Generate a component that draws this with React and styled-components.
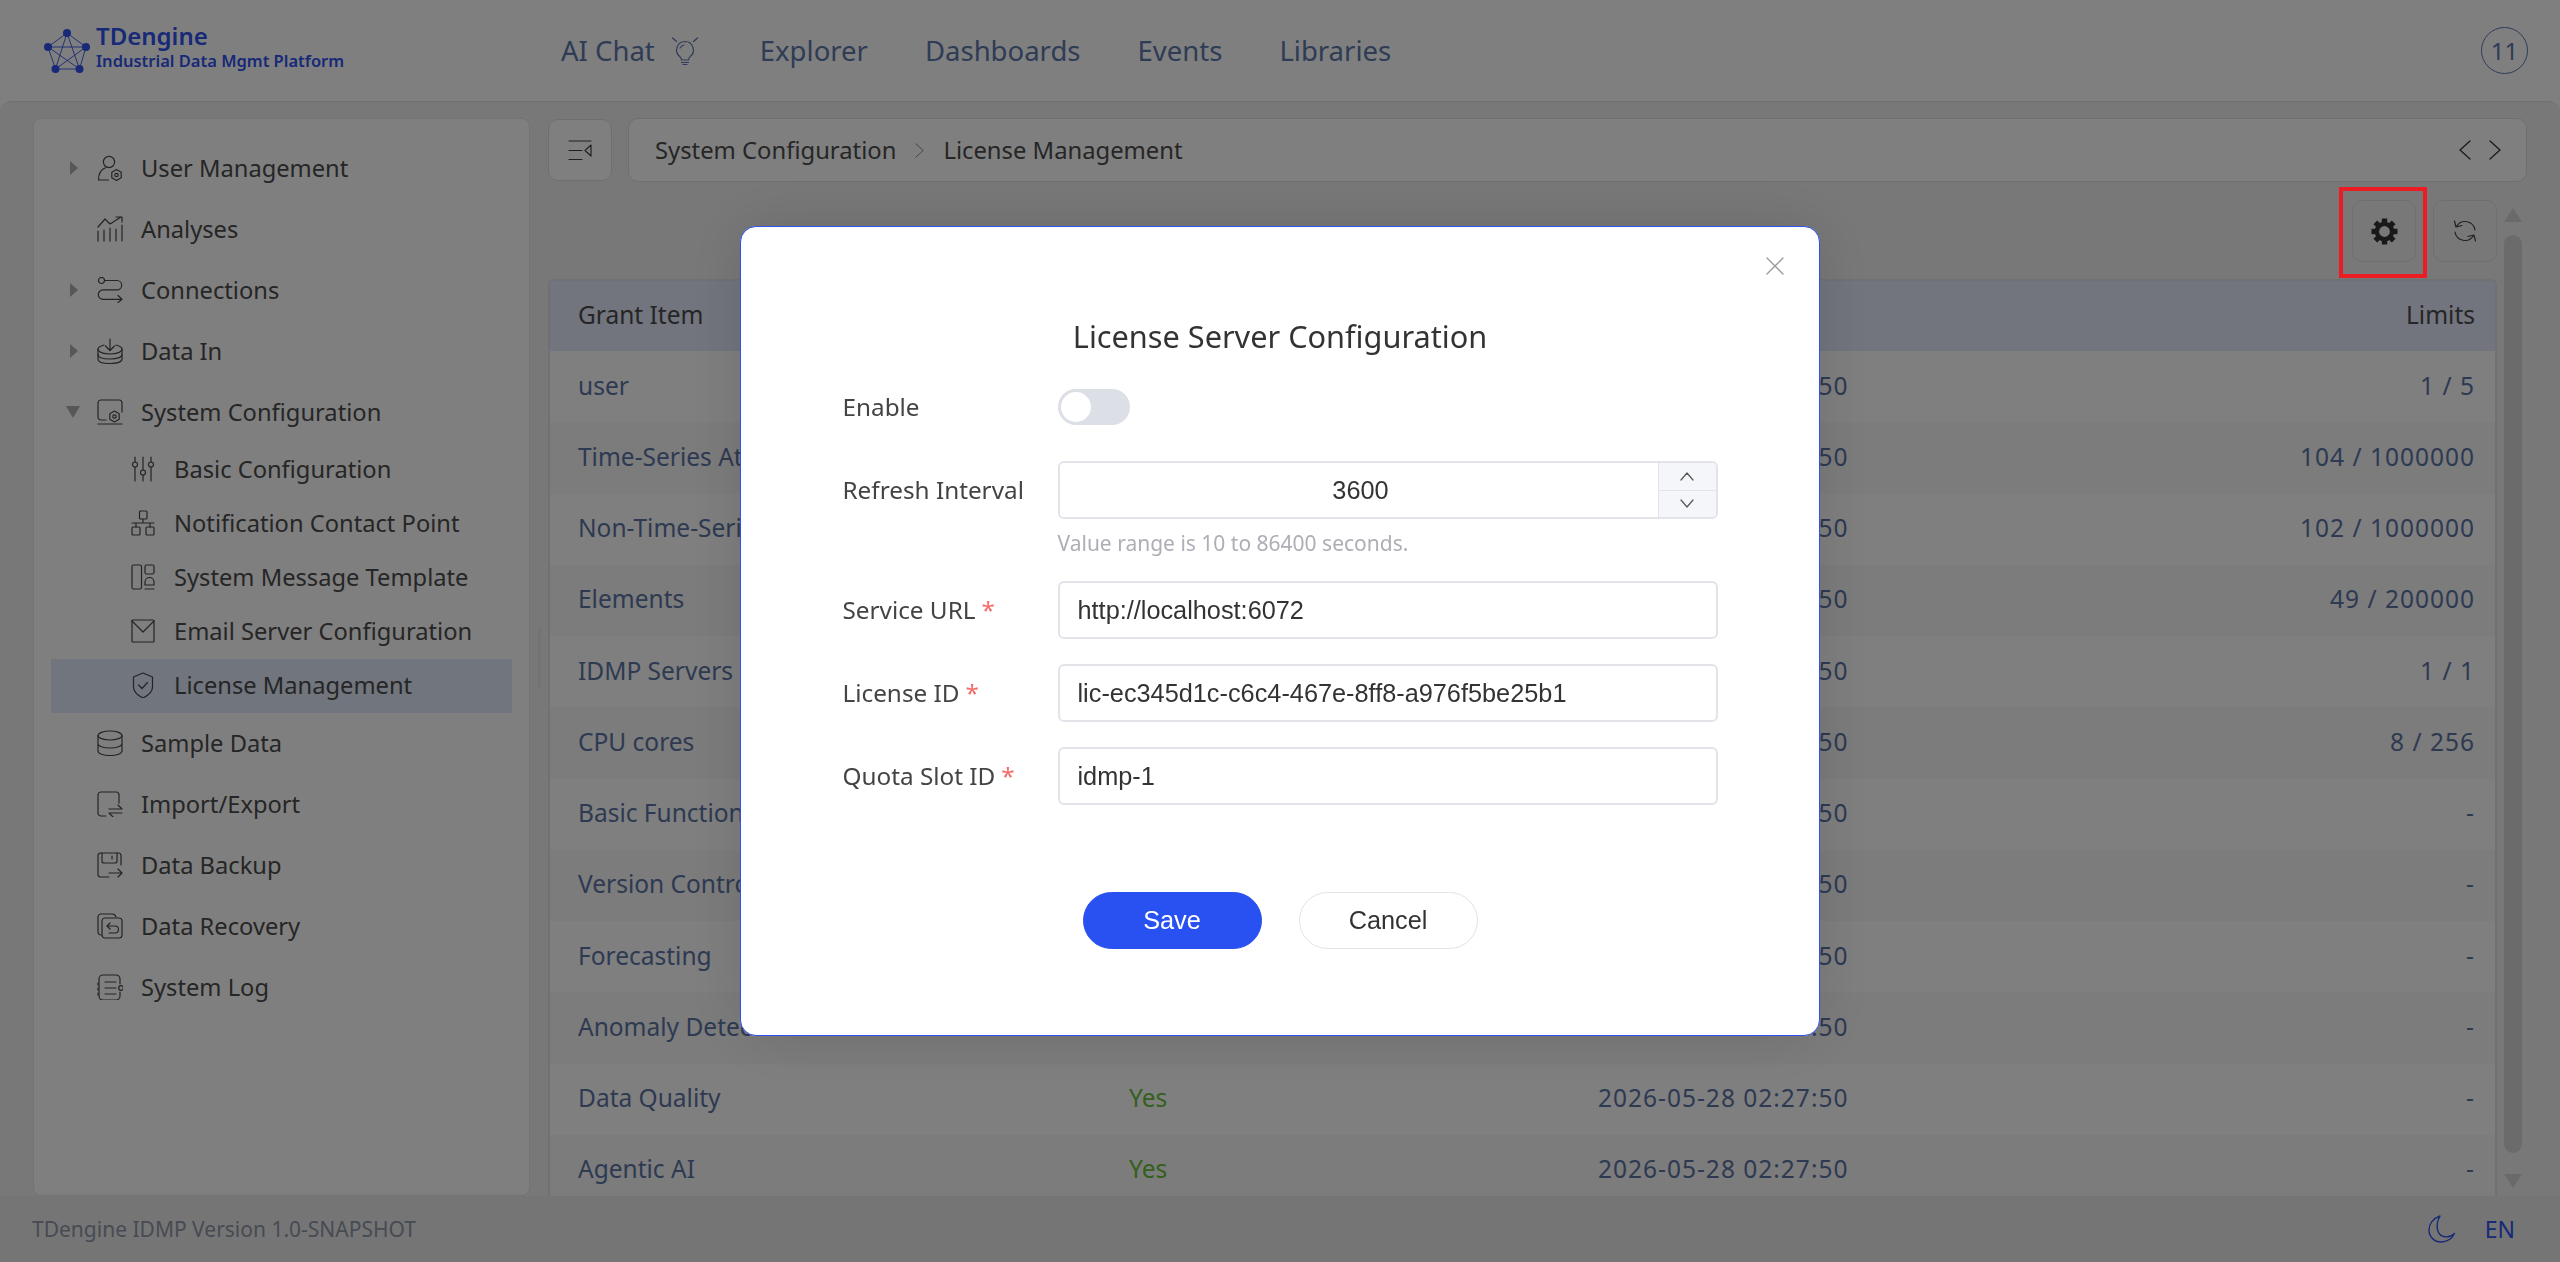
import React from "react";
import styled, { createGlobalStyle } from "styled-components";

const GlobalStyle = createGlobalStyle`
  html, body, #root { margin: 0; height: 100%; }
  body { font-family: "Noto Sans", Roboto, sans-serif; overflow: hidden; }
  * { box-sizing: border-box; }
`;

const Icon = ({ size = 26, h, vb = "0 0 26 26", sw = 1.3, children }) => (
  <svg width={size} height={h || size} viewBox={vb} fill="none" stroke="currentColor" strokeWidth={sw} strokeLinecap="round" strokeLinejoin="round">
    {children}
  </svg>
);

const menuIcons = {
  user: (
    <>
      <circle cx="12" cy="7" r="5.6" />
      <path d="M1.5 25c0-6 2.500-10.500 7-12.200M1.500 25h10" />
      <path d="M19.500 14.500l4.700 2.800v5.400l-4.700 2.800-4.700-2.800v-5.400z" />
      <circle cx="19.500" cy="20" r="1.700" />
    </>
  ),
  analyses: (
    <>
      <path d="M1 25v-10M7 25V14M13 25V12M19 25V13M25 25V9" />
      <path d="M1 11l7-8 5 5 11-7M19 1h6v5" />
    </>
  ),
  connections: (
    <>
      <circle cx="4.500" cy="3.500" r="3" />
      <path d="M8 3.500h12a4.700 4.700 0 0 1 0 9.400H6a4.700 4.700 0 0 0 0 9.400h19M21 18.500l4 3.800-4 3.200" />
    </>
  ),
  dataIn: (
    <>
      <path d="M7 7C3.500 8 1 9 1 11v10c0 3 5 4.500 12 4.500S25 24 25 21V11c0-2-2.500-3-6-4" />
      <path d="M1 11c0 3 5 5 12 5s12-2 12-5M1 16.500c0 3 5 4.500 12 4.500s12-1.500 12-4.500" />
      <path d="M13 1v11M8.500 8l4.500 4.500L17.500 8" />
    </>
  ),
  system: (
    <>
      <path d="M9 21H4a3 3 0 0 1-3-3V4a3 3 0 0 1 3-3h18a3 3 0 0 1 3 3v9M1 25h24" />
      <path d="M17.500 12l4.700 2.700v5.500l-4.700 2.700-4.700-2.700v-5.500z" />
      <circle cx="17.500" cy="17.500" r="1.700" />
    </>
  ),
  sample: (
    <>
      <ellipse cx="13" cy="5.500" rx="12" ry="4.500" />
      <path d="M1 5.500V21c0 2.500 5 4.500 12 4.500S25 23.500 25 21V5.500M1 13.500c0 2.500 5 4.500 12 4.500s12-2 12-4.500" />
    </>
  ),
  importExport: (
    <>
      <path d="M9 25H4a3 3 0 0 1-3-3V4a3 3 0 0 1 3-3h15a3 3 0 0 1 3 3v8" />
      <path d="M12 18h13l-4-4M25 22H12l4 4" />
    </>
  ),
  backup: (
    <>
      <path d="M12 25H3.500A2.500 2.500 0 0 1 1 22.500v-19A2.500 2.500 0 0 1 3.500 1h18A2.500 2.500 0 0 1 24 3.500V13" />
      <path d="M5 1v8a2 2 0 0 0 2 2h11a2 2 0 0 0 2-2V1M15 4v3M12 21h13M21 17l4 4-4 4" />
    </>
  ),
  recovery: (
    <>
      <path d="M4 22a3 3 0 0 1-3-3V4a3 3 0 0 1 3-3h11a4 4 0 0 1 4 3" />
      <rect x="5" y="5" width="20" height="20" rx="3" />
      <path d="M10 13h8a3.500 3.500 0 0 1 0 7h-6M10 13l3-3M10 13l3 3" />
    </>
  ),
  log: (
    <>
      <path d="M23 10V5a4 4 0 0 0-4-4H6a4 4 0 0 0-4 4v17a4 4 0 0 0 4 4h13a4 4 0 0 0 4-4v-4" />
      <path d="M8 8h11M8 14h11M8 20h11M1 9v2M1 14v2M1 19v2" />
      <circle cx="24" cy="14" r="2.300" />
    </>
  ),
  sliders: (
    <>
      <path d="M4 1v5M4 11v14M12 1v13M12 19v6M20 1v5M20 11v14" />
      <circle cx="4" cy="8.500" r="2.500" />
      <circle cx="12" cy="16.500" r="2.500" />
      <circle cx="20" cy="8.500" r="2.500" />
    </>
  ),
  network: (
    <>
      <rect x="8.500" y="1" width="7.500" height="8" rx="1" />
      <rect x="1" y="17" width="8" height="8" rx="1" />
      <rect x="15" y="17" width="8" height="8" rx="1" />
      <path d="M12 9v4M1 13h22M5 13v4M19 13v4" />
    </>
  ),
  template: (
    <>
      <rect x="1" y="1" width="9.500" height="24" rx="1.500" />
      <rect x="14" y="1" width="9" height="9" rx="1.500" />
      <path d="M14 21v-3a4.500 4.500 0 0 1 9 0v3zM14 25h9" />
    </>
  ),
  mail: (
    <>
      <rect x="1" y="2" width="22" height="22" rx="1" />
      <path d="M1 3l11 11L23 3" />
    </>
  ),
  shield: (
    <>
      <path d="M12 1l9.500 4v10c0 5-4.500 8.500-9.500 11-5-2.500-9.500-6-9.500-11V5z" />
      <path d="M7.500 13l3.500 3.500 5.500-6" />
    </>
  ),
};

const Screen = styled.div`
  display: flex;
  flex-direction: column;
  height: 100vh;
  background: #fff;
  color: #4c4c4c;
`;

const TopBar = styled.header`
  display: flex;
  align-items: center;
  height: 101px;
  padding: 0 32px 0 44px;
  flex-shrink: 0;
`;

const LogoBlock = styled.div`
  display: flex;
  align-items: center;
  gap: 6px;
  width: 517px;
  color: #2f52ee;
`;

const LogoText = styled.div`
  display: flex;
  flex-direction: column;
  margin-top: -8px;
  font-family: "Noto Sans", sans-serif;
  font-weight: 600;
`;

const LogoName = styled.span`
  font-size: 24px;
  line-height: 28px;
`;

const LogoSub = styled.span`
  font-size: 16.500px;
  line-height: 22px;
`;

const Nav = styled.nav`
  display: flex;
  align-items: center;
  gap: 57px;
  font-size: 27.500px;
  color: #5e78aa;
  flex: 1;
`;

const NavItem = styled.span`
  display: flex;
  align-items: center;
  gap: 16px;

  &:first-child {
    margin-right: 4px;
  }
`;

const Avatar = styled.div`
  width: 47px;
  height: 47px;
  border: 1.500px solid #5e78aa;
  border-radius: 50%;
  display: flex;
  align-items: center;
  justify-content: center;
  color: #5e78aa;
  font-size: 24px;
`;

const Body = styled.div`
  flex: 1;
  min-height: 0;
  display: flex;
  padding: 16px 33px 0;
  background: #f0f0f0;
  border-top: 1px solid #e0e0e0;
  border-radius: 12px 12px 0 0;
`;

const SidePanel = styled.aside`
  width: 497px;
  flex-shrink: 0;
  padding: 19px 17px 0;
  background: #fff;
  border: 1px solid #e6e6e6;
  border-radius: 8px 8px 8px 8px;
`;

const MenuRow = styled.div`
  display: flex;
  align-items: center;
  height: ${(p) => (p.$sub ? 54 : 61)}px;
  padding-left: ${(p) => (p.$sub ? 80 : 19)}px;
  padding-bottom: 2px;
  gap: ${(p) => (p.$sub ? 19 : 0)}px;
  font-size: 23.700px;
  color: #4c4c4c;
  background: ${(p) => (p.$active ? "#e2eafa" : "transparent")};

  svg {
    color: #484848;
    flex-shrink: 0;
  }
`;

const CaretSlot = styled.span`
  display: flex;
  align-items: center;
  width: 27px;
  height: 100%;
`;

const Caret = styled.i`
  display: block;
  ${(p) =>
    p.$open
      ? "margin-left:-4px;border-left:7px solid transparent;border-right:7px solid transparent;border-top:12px solid #aeaeae;"
      : "border-top:7px solid transparent;border-bottom:7px solid transparent;border-left:8px solid #aeaeae;"}
`;

const MenuLabel = styled.span`
  margin-left: ${(p) => (p.$sub ? 0 : 18)}px;
`;

const Resizer = styled.div`
  width: 18px;
  flex-shrink: 0;
  display: flex;
  align-items: center;
  justify-content: center;
`;

const ResizerHandle = styled.i`
  display: block;
  width: 3px;
  height: 59px;
  background: #e6e6e6;
`;

const Main = styled.main`
  flex: 1;
  min-width: 0;
  display: flex;
  flex-direction: column;
`;

const CrumbRow = styled.div`
  display: flex;
  gap: 16px;
  height: 64px;
  flex-shrink: 0;
`;

const SquareButton = styled.button`
  width: 64px;
  height: 62px;
  padding: 0;
  flex-shrink: 0;
  display: flex;
  align-items: center;
  justify-content: center;
  background: transparent;
  color: #444;
  border: 1px solid #dedede;
  border-radius: 10px;
  position: ${(p) => (p.$marked ? "relative" : "static")};
`;

const CollapseButton = styled(SquareButton)`
  background: #fff;
  margin-top: 1px;
`;

const Crumbs = styled.div`
  flex: 1;
  display: flex;
  align-items: center;
  padding: 0 25px 0 26px;
  background: #fff;
  border: 1px solid #dedede;
  border-radius: 10px;
  font-size: 23.800px;
  color: #4c4c4c;
`;

const CrumbSep = styled.span`
  display: flex;
  margin: 0 19px;
  color: #888;
`;

const CrumbArrows = styled.span`
  display: flex;
  gap: 18px;
  margin-left: auto;
  color: #333;
`;

const LowerArea = styled.div`
  flex: 1;
  min-height: 0;
  display: flex;
  margin-top: 18px;
`;

const Content = styled.div`
  width: 1949px;
  display: flex;
  flex-direction: column;
`;

const Toolbar = styled.div`
  display: flex;
  justify-content: flex-end;
  gap: 17px;
  height: 62px;
  margin-bottom: 17px;
  flex-shrink: 0;
`;

/* annotation drawn on top of the mask, so it stays bright */
const RedMark = styled.span`
  position: absolute;
  top: -14px;
  left: -14px;
  width: 88px;
  height: 91px;
  border: 4px solid #ed1c24;
  z-index: 30;
`;

const TableBox = styled.div`
  flex: 1;
  min-height: 0;
  overflow: hidden;
  border: 2px solid #dfe3ea;
  border-bottom: 0;
  border-radius: 6px 6px 0 0;
  background: #fff;
`;

const Grid = styled.table`
  width: 100%;
  border-collapse: collapse;
  table-layout: fixed;
  font-size: 24.500px;
`;

const HeadCell = styled.th`
  height: 70px;
  padding: 0 ${(p) => (p.$right ? 20 : 28)}px 3px 28px;
  text-align: ${(p) => (p.$right ? "right" : "left")};
  font-weight: 400;
  color: #4c4c4c;
  background: #e4e9fd;
`;

const Row = styled.tr`
  background: ${(p) => (p.$even ? "#f8f8f8" : "#fff")};
`;

const Cell = styled.td`
  height: 71.250px;
  padding: 0 ${(p) => (p.$right ? 20 : 28)}px 3px 28px;
  text-align: ${(p) => (p.$right ? "right" : "left")};
  color: ${(p) => (p.$ok ? "#67c23a" : "#5c74a4")};
  letter-spacing: ${(p) => (p.$num ? "1px" : "0")};
  white-space: nowrap;
`;

const ScrollTrack = styled.div`
  width: 18px;
  margin: 8px 5px 8px 7px;
  display: flex;
  flex-direction: column;
  align-items: center;
  justify-content: space-between;
`;

const ScrollArrow = styled.i`
  display: block;
  border-left: 9px solid transparent;
  border-right: 9px solid transparent;
  ${(p) => (p.$down ? "border-top" : "border-bottom")}: 14px solid #d4d4d4;
`;

const ScrollThumb = styled.div`
  width: 18px;
  flex: 1;
  margin: 13px 0 21px;
  background: #d6d6d6;
  border-radius: 9px;
`;

const Footer = styled.footer`
  height: 66px;
  flex-shrink: 0;
  display: flex;
  align-items: center;
  padding: 0 45px 0 32px;
  background: #ebebeb;
  font-size: 21px;
  color: #8e96a6;
`;

const FooterRight = styled.div`
  margin-left: auto;
  display: flex;
  align-items: center;
  gap: 29px;
  color: #2f52ee;
  font-size: 23px;
`;

const Mask = styled.div`
  position: fixed;
  inset: 0;
  z-index: 10;
  display: flex;
  align-items: center;
  justify-content: center;
  background: rgba(0, 0, 0, 0.5);
`;

const Dialog = styled.div`
  position: relative;
  width: 1080px;
  height: 810px;
  padding: 87px 101.500px 0;
  background: #fff;
  border: 1.500px solid #2f52ee;
  border-radius: 16px;
  box-shadow: 0 0 60px rgba(0, 0, 0, 0.12);
  color: #333;
`;

const CloseMark = styled.span`
  position: absolute;
  top: 30px;
  right: 35px;
  display: flex;
  color: #999;
`;

const DialogTitle = styled.h2`
  margin: 0 0 28px;
  padding-bottom: 3px;
  font-size: 30.700px;
  line-height: 44px;
  font-weight: 400;
  text-align: center;
  color: #333;
`;

const Form = styled.form`
  display: flex;
  flex-direction: column;
  gap: 25px;
`;

const FieldRow = styled.div`
  display: grid;
  grid-template-columns: 215px 1fr;
  align-items: center;
  row-gap: 12px;
  margin-bottom: ${(p) => p.$after || 0}px;
`;

const FieldLabel = styled.label`
  padding-bottom: 2px;
  font-size: 24.300px;
  color: #444;
`;

const Star = styled.span`
  margin-left: 6px;
  color: #f56c6c;
`;

const SwitchTrack = styled.div`
  width: 72px;
  height: 36px;
  padding: 3px;
  border-radius: 18px;
  background: #dcdfe6;
`;

const SwitchKnob = styled.div`
  width: 30px;
  height: 30px;
  border-radius: 50%;
  background: #fff;
`;

const TextBox = styled.input`
  width: 100%;
  height: 58px;
  padding: 0 18px;
  border: 2px solid #e3e4ea;
  border-radius: 6px;
  background: #fff;
  color: #333;
  font-family: "Liberation Sans", Arial, sans-serif;
  font-size: 25.300px;
  outline: none;
`;

const NumberBox = styled.div`
  display: flex;
  height: 58px;
  border: 2px solid #e3e4ea;
  border-radius: 6px;
  overflow: hidden;
`;

const NumberValue = styled.input`
  flex: 1;
  min-width: 0;
  padding: 0 0 0 4px;
  border: 0;
  outline: none;
  text-align: center;
  color: #333;
  font-family: "Liberation Sans", Arial, sans-serif;
  font-size: 25.300px;
`;

const Stepper = styled.div`
  width: 58px;
  display: flex;
  flex-direction: column;
  border-left: 1px solid #e3e4ea;
  background: #f5f6fa;
`;

const StepButton = styled.span`
  flex: 1;
  display: flex;
  align-items: center;
  justify-content: center;
  color: #555;
  border-top: ${(p) => (p.$down ? "1px solid #e3e4ea" : "0")};
`;

const FieldHelp = styled.div`
  grid-column: 2;
  font-size: 21px;
  line-height: 24px;
  color: #adaeb6;
  margin-bottom: 1px;
`;

const DialogActions = styled.div`
  display: flex;
  justify-content: center;
  gap: 37px;
  margin-top: 87px;
`;

const PillButton = styled.button`
  width: 179px;
  height: 57px;
  border-radius: 29px;
  border: 1px solid ${(p) => (p.$primary ? "#2950f0" : "#e2e3e8")};
  background: ${(p) => (p.$primary ? "#2950f0" : "#fff")};
  color: ${(p) => (p.$primary ? "#fff" : "#333")};
  font-family: "Liberation Sans", Arial, sans-serif;
  font-size: 25.300px;
`;

const menu = [
  { label: "User Management", icon: "user", caret: true },
  { label: "Analyses", icon: "analyses" },
  { label: "Connections", icon: "connections", caret: true },
  { label: "Data In", icon: "dataIn", caret: true },
  { label: "System Configuration", icon: "system", caret: true, open: true },
  { label: "Basic Configuration", icon: "sliders", sub: true },
  { label: "Notification Contact Point", icon: "network", sub: true },
  { label: "System Message Template", icon: "template", sub: true },
  { label: "Email Server Configuration", icon: "mail", sub: true },
  { label: "License Management", icon: "shield", sub: true, active: true },
  { label: "Sample Data", icon: "sample" },
  { label: "Import/Export", icon: "importExport" },
  { label: "Data Backup", icon: "backup" },
  { label: "Data Recovery", icon: "recovery" },
  { label: "System Log", icon: "log" },
];

const grants = [
  { name: "user", limit: "1 / 5" },
  { name: "Time-Series Attributes", limit: "104 / 1000000" },
  { name: "Non-Time-Series Attributes", limit: "102 / 1000000" },
  { name: "Elements", limit: "49 / 200000" },
  { name: "IDMP Servers", limit: "1 / 1" },
  { name: "CPU cores", limit: "8 / 256" },
  { name: "Basic Functions", limit: "-" },
  { name: "Version Control", limit: "-" },
  { name: "Forecasting", limit: "-" },
  { name: "Anomaly Detection", limit: "-" },
  { name: "Data Quality", limit: "-", granted: "Yes" },
  { name: "Agentic AI", limit: "-", granted: "Yes" },
];

const LogoMark = () => (
  <svg width="46" height="46" viewBox="0 0 46 46" fill="none" stroke="currentColor" strokeWidth="0.9">
    <path d="M23 5L4 19l7.500 22h24L42 19zM23 5l-11.500 36L42 19H4l31.500 22z" />
    <g fill="currentColor" stroke="none">
      <circle cx="23" cy="5" r="4" />
      <circle cx="4" cy="19" r="4" />
      <circle cx="42" cy="19" r="4" />
      <circle cx="11.500" cy="41" r="4" />
      <circle cx="35.500" cy="41" r="4" />
    </g>
  </svg>
);

const BulbIcon = () => (
  <Icon size={28} vb="0 0 28 28" sw={1.200}>
    <path d="M14 4.500a8.500 8.500 0 0 0-5 15.300c1 1 1.500 1.700 1.500 3.200h7c0-1.500.5-2.200 1.500-3.200a8.500 8.500 0 0 0-5-15.300z" />
    <path d="M10.500 25.500h7M12 27.500h4M1.500 1l4 3.500M26.500 1l-4 3.500M9 11a6 6 0 0 1 4-3" />
  </Icon>
);

const MoonIcon = () => (
  <Icon size={28} vb="0 0 28 28" sw={1.400}>
    <path d="M12 1C5 3.500 1 9 1 15c0 7 5.500 12 12 12 6 0 11-3.500 13.500-8.500-3 3-7 4-11 3C9.500 20 6.500 11 12 1z" />
  </Icon>
);

const CollapseIcon = () => (
  <Icon size={24} h={21} vb="0 0 24 21" sw={1.200}>
    <path d="M1 1h22M1 10.500h13M1 19.500h13M23 5l-6 5.500 6 5.500z" />
  </Icon>
);

const GearIcon = () => (
  <svg width="27" height="27" viewBox="0 0 27 27">
    <circle cx="13.500" cy="13.500" r="7.600" fill="none" stroke="#333" strokeWidth="4.400" />
    {[0, 45, 90, 135, 180, 225, 270, 315].map((angle) => (
      <rect key={angle} x="10.800" y="0.500" width="5.400" height="5.500" fill="#333" transform={`rotate(${angle} 13.500 13.500)`} />
    ))}
  </svg>
);

const RefreshIcon = () => (
  <Icon size={24} vb="0 0 24 24" sw={1.200}>
    <path d="M22 11A10 10 0 0 0 3.500 7.500M1.500 2L3 8l6-1.500" />
    <path d="M2 13a10 10 0 0 0 18.500 3.500M22.500 22L21 16l-6 1.500" />
  </Icon>
);

const Chevron = ({ dir, size = 12, h = 20 }) => {
  const paths = {
    left: "M11 1L1 10l10 9",
    right: "M1 1l10 9-10 9",
  };
  return (
    <Icon size={size} h={h} vb="0 0 12 20" sw={1.300}>
      <path d={paths[dir]} />
    </Icon>
  );
};

const StepChevron = ({ down }) => (
  <Icon size={14} h={9} vb="0 0 14 9" sw={1.200}>
    <path d={down ? "M1 1l6 7 6-7" : "M1 8l6-7 6 7"} />
  </Icon>
);

const App = () => (
  <>
    <GlobalStyle />
    <Screen>
      <TopBar>
        <LogoBlock>
          <LogoMark />
          <LogoText>
            <LogoName>TDengine</LogoName>
            <LogoSub>Industrial Data Mgmt Platform</LogoSub>
          </LogoText>
        </LogoBlock>
        <Nav>
          <NavItem>
            AI Chat <BulbIcon />
          </NavItem>
          <NavItem>Explorer</NavItem>
          <NavItem>Dashboards</NavItem>
          <NavItem>Events</NavItem>
          <NavItem>Libraries</NavItem>
        </Nav>
        <Avatar>11</Avatar>
      </TopBar>

      <Body>
        <SidePanel>
          {menu.map((item) => (
            <MenuRow key={item.label} $sub={item.sub} $active={item.active}>
              {!item.sub && (
                <CaretSlot>{item.caret && <Caret $open={item.open} />}</CaretSlot>
              )}
              <Icon size={item.sub ? 24 : 26} h={26} vb={item.sub ? "0 0 24 26" : "0 0 26 26"} sw={1.200}>
                {menuIcons[item.icon]}
              </Icon>
              <MenuLabel $sub={item.sub}>{item.label}</MenuLabel>
            </MenuRow>
          ))}
        </SidePanel>
        <Resizer>
          <ResizerHandle />
        </Resizer>
        <Main>
          <CrumbRow>
            <CollapseButton>
              <CollapseIcon />
            </CollapseButton>
            <Crumbs>
              System Configuration
              <CrumbSep>
                <Chevron dir="right" size={9} h={15} />
              </CrumbSep>
              License Management
              <CrumbArrows>
                <Chevron dir="left" />
                <Chevron dir="right" />
              </CrumbArrows>
            </Crumbs>
          </CrumbRow>
          <LowerArea>
            <Content>
              <Toolbar>
                <SquareButton $marked>
                  <GearIcon />
                  <RedMark />
                </SquareButton>
                <SquareButton>
                  <RefreshIcon />
                </SquareButton>
              </Toolbar>
              <TableBox>
                <Grid>
                  <colgroup>
                    <col width="551" />
                    <col width="469" />
                    <col />
                  </colgroup>
                  <thead>
                    <tr>
                      <HeadCell>Grant Item</HeadCell>
                      <HeadCell />
                      <HeadCell />
                      <HeadCell $right>Limits</HeadCell>
                    </tr>
                  </thead>
                  <tbody>
                    {grants.map((grant, i) => (
                      <Row key={grant.name} $even={i % 2 === 1}>
                        <Cell>{grant.name}</Cell>
                        <Cell $ok>{grant.granted}</Cell>
                        <Cell $num>2026-05-28 02:27:50</Cell>
                        <Cell $right $num>
                          {grant.limit}
                        </Cell>
                      </Row>
                    ))}
                  </tbody>
                </Grid>
              </TableBox>
            </Content>
            <ScrollTrack>
              <ScrollArrow />
              <ScrollThumb />
              <ScrollArrow $down />
            </ScrollTrack>
          </LowerArea>
        </Main>
      </Body>

      <Footer>
        TDengine IDMP Version 1.0-SNAPSHOT
        <FooterRight>
          <MoonIcon />
          EN
        </FooterRight>
      </Footer>
    </Screen>

    <Mask>
      <Dialog>
        <CloseMark>
          <Icon size={18} vb="0 0 18 18" sw={1.300}>
            <path d="M1 1l16 16M17 1L1 17" />
          </Icon>
        </CloseMark>
        <DialogTitle>License Server Configuration</DialogTitle>
        <Form>
          <FieldRow $after={11}>
            <FieldLabel>Enable</FieldLabel>
            <SwitchTrack>
              <SwitchKnob />
            </SwitchTrack>
          </FieldRow>
          <FieldRow>
            <FieldLabel>Refresh Interval</FieldLabel>
            <NumberBox>
              <NumberValue readOnly value="3600" />
              <Stepper>
                <StepButton>
                  <StepChevron />
                </StepButton>
                <StepButton $down>
                  <StepChevron down />
                </StepButton>
              </Stepper>
            </NumberBox>
            <FieldHelp>Value range is 10 to 86400 seconds.</FieldHelp>
          </FieldRow>
          <FieldRow>
            <FieldLabel>
              Service URL<Star>*</Star>
            </FieldLabel>
            <TextBox readOnly value="http://localhost:6072" />
          </FieldRow>
          <FieldRow>
            <FieldLabel>
              License ID<Star>*</Star>
            </FieldLabel>
            <TextBox readOnly value="lic-ec345d1c-c6c4-467e-8ff8-a976f5be25b1" />
          </FieldRow>
          <FieldRow>
            <FieldLabel>
              Quota Slot ID<Star>*</Star>
            </FieldLabel>
            <TextBox readOnly value="idmp-1" />
          </FieldRow>
        </Form>
        <DialogActions>
          <PillButton $primary>Save</PillButton>
          <PillButton>Cancel</PillButton>
        </DialogActions>
      </Dialog>
    </Mask>
  </>
);

export default App;
